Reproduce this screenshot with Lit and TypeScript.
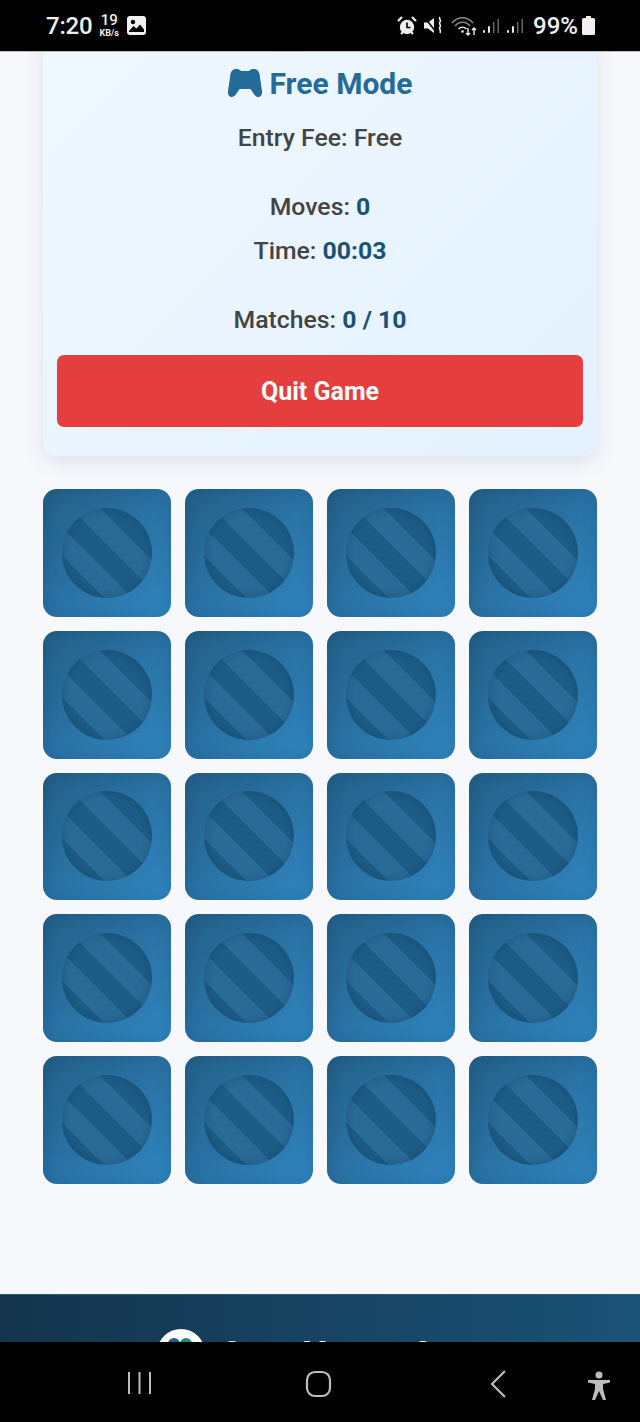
import { LitElement, html, css, svg } from "lit";
import { customElement } from "lit/decorators.js";

const TILE_COUNT = 20;

const signalBars = svg`
  <rect x="0" y="11" width="2" height="3" rx="1" fill="#e8e8e8"></rect>
  <rect x="5" y="7" width="2" height="7" rx="1" fill="#e8e8e8"></rect>
  <rect x="10" y="3" width="1.4" height="11" fill="#6d6d6d"></rect>
  <rect x="14.5" y="0" width="1.4" height="14" fill="#6d6d6d"></rect>
`;

@customElement("app-root")
export class AppRoot extends LitElement {
  static styles = css`
    :host {
      display: flex;
      flex-direction: column;
      width: 640px;
      height: 1422px;
      overflow: hidden;
      background: #f7f8fc;
      font-family: Roboto, "Liberation Sans", sans-serif;
    }

    .status {
      flex: none;
      height: 51px;
      box-sizing: border-box;
      padding: 0 45px 0 46px;
      background: #000;
      color: #f0f0f0;
      display: flex;
      align-items: center;
    }
    .clock {
      font-size: 24px;
      font-weight: 500;
      letter-spacing: -0.2px;
    }
    .speed {
      margin-left: 7px;
      display: flex;
      flex-direction: column;
      align-items: center;
      font-weight: 700;
    }
    .speed b {
      font-size: 15px;
      line-height: 15px;
      font-weight: 500;
    }
    .speed small {
      font-size: 9px;
      line-height: 10px;
    }
    .pic {
      margin-left: 8px;
    }
    .spacer {
      flex: 1;
    }
    .tray {
      display: flex;
      align-items: center;
    }
    .pct {
      font-size: 24px;
      font-weight: 500;
      margin: 0 4px 0 10px;
    }

    .page {
      flex: 1;
      min-height: 0;
      overflow: hidden;
      border-top: 1px solid #b9bcc0;
      box-sizing: border-box;
      display: flex;
      flex-direction: column;
    }

    .panel {
      margin: -19px 43px 0;
      padding: 32px 14px 29px;
      border-radius: 14px;
      background: linear-gradient(135deg, #f0f8ff, #e3f1fe);
      box-shadow: 0 6px 20px rgba(20, 50, 80, 0.11);
      text-align: center;
    }
    .title {
      margin: 0;
      height: 36px;
      display: flex;
      align-items: center;
      justify-content: center;
      gap: 8px;
      font-size: 30px;
      font-weight: 700;
      color: #246a9a;
    }
    .line {
      margin: 0;
      font-size: 24.8px;
      line-height: 44px;
      font-weight: 500;
      color: #444;
    }
    .line b {
      font-weight: 700;
      color: #1a5276;
    }
    .fee {
      margin-top: 15px;
      margin-bottom: 25px;
    }
    .matches {
      margin-top: 25px;
    }
    .quit {
      display: block;
      width: 100%;
      height: 72px;
      margin-top: 13px;
      border: none;
      border-radius: 7px;
      background: #e53e3e;
      color: #fff;
      font: 700 25px Roboto, "Liberation Sans", sans-serif;
    }

    .board {
      margin: 33px 43px 0;
      display: grid;
      grid-template-columns: repeat(4, 128px);
      grid-auto-rows: 127.8px;
      gap: 14px;
    }
    .tile {
      border-radius: 14px;
      background: linear-gradient(135deg, #235f88, #3086c1);
      box-shadow: inset 0 0 16px rgba(16, 50, 80, 0.2);
      display: flex;
      align-items: center;
      justify-content: center;
    }
    .disc {
      width: 90px;
      height: 90px;
      border-radius: 50%;
      background: repeating-linear-gradient(
        45deg,
        #296a97 0 10px,
        #1c5c86 10px 30px,
        #296a97 30px 40px
      );
      box-shadow: inset 0 0 8px rgba(10, 40, 65, 0.28);
    }

    .foot {
      flex: none;
      margin-top: 110px;
      height: 120px;
      box-sizing: border-box;
      border-top: 1px solid #2d5a72;
      background: linear-gradient(90deg, #14344d, #1a5276);
      padding: 34px 0 0 157px;
      display: flex;
      gap: 17px;
      color: #fff;
    }
    .logo {
      flex: none;
      width: 48px;
      height: 48px;
      border-radius: 50%;
      background: #fff;
      position: relative;
      overflow: hidden;
    }
    .logo i {
      position: absolute;
      top: 9px;
      width: 12px;
      height: 12px;
      border-radius: 50%;
    }
    .logo i:nth-child(1) {
      left: 11px;
      background: #1f5f8f;
    }
    .logo i:nth-child(2) {
      left: 23px;
      background: #1f8a78;
    }
    .brand {
      font-size: 28px;
      font-weight: 700;
      line-height: 40px;
      margin-top: 3px;
      white-space: nowrap;
    }

    .nav {
      flex: none;
      height: 80px;
      background: #000;
      position: relative;
    }
    .nav svg {
      position: absolute;
    }
  `;

  render() {
    return html`
      <div class="status">
        <span class="clock">7:20</span>
        <span class="speed"><b>19</b><small>KB/s</small></span>
        <svg class="pic" width="19" height="19" viewBox="0 0 19 19">
          <rect width="19" height="19" rx="3" fill="#f0f0f0"></rect>
          <circle cx="6" cy="6" r="2.2" fill="#000"></circle>
          <path d="M2 15l4.5-5 3 2.5 3.5-4 4 5V16H2z" fill="#000"></path>
        </svg>
        <span class="spacer"></span>
        <div class="tray">
          <svg width="20" height="20" viewBox="0 0 20 20">
            <circle cx="10" cy="11" r="7.2" fill="#eee"></circle>
            <path d="M10 6.5V11.5H13.5" fill="none" stroke="#000" stroke-width="1.6"></path>
            <path d="M1 5l4-4M19 5l-4-4M4 18l2-2M16 18l-2-2" stroke="#eee" stroke-width="2.2"></path>
          </svg>
          <svg style="margin-left:7px" width="20" height="20" viewBox="0 0 20 20">
            <path d="M0 6.5h4L10 2v15l-6-4.5H0z" fill="#eee"></path>
            <path d="M1 2l11 14" stroke="#000" stroke-width="1.5"></path>
            <path d="M16 1c-2 2 2 3 0 5s2 3 0 5 2 3 0 6" fill="none" stroke="#eee" stroke-width="1.6"></path>
          </svg>
          <svg style="margin-left:7px" width="27" height="20" viewBox="0 0 27 20">
            <path d="M1 7c6-7 15-7 21 0M4 10c4-5 11-5 15 0" fill="none" stroke="#8a8a8a" stroke-width="1.5"></path>
            <path d="M7.5 13c2.500-2.500 5.500-2.500 8 0" fill="none" stroke="#eee" stroke-width="1.5"></path>
            <circle cx="11.500" cy="15.500" r="1.300" fill="#eee"></circle>
            <path d="M17 12v7M15 17l2 2 2-2M23 19v-7M21 14l2-2 2 2" fill="none" stroke="#eee" stroke-width="1.400"></path>
          </svg>
          <svg style="margin-left:5px" width="16" height="14" viewBox="0 0 16 14">${signalBars}</svg>
          <svg style="margin-left:8px" width="16" height="14" viewBox="0 0 16 14">${signalBars}</svg>
          <span class="pct">99%</span>
          <svg width="13" height="19" viewBox="0 0 13 19">
            <path d="M4 0h5v2h2.500a1.500 1.500 0 0 1 1.500 1.500V17.500a1.500 1.500 0 0 1-1.500 1.500h-10A1.500 1.500 0 0 1 0 17.500V3.500A1.500 1.500 0 0 1 1.500 2H4z" fill="#f0f0f0"></path>
          </svg>
        </div>
      </div>

      <div class="page">
        <section class="panel">
          <h2 class="title">
            <svg width="34" height="28" viewBox="0 0 34 28">
              <path
                d="M8 0c2 0 4 .5 5 2h8c1-1.500 3-2 5-2 3 0 5 2 5.500 5L34 22c.5 3-1 6-3.500 6-2 0-3.500-1.500-5-3.500L22.500 20h-11l-3 4.500C7 26.500 5.500 28 3.500 28 1 28-.5 25 0 22L2.500 5C3 2 5 0 8 0z"
                fill="#246a9a"
              ></path>
            </svg>
            Free Mode
          </h2>
          <p class="line fee">Entry Fee: Free</p>
          <p class="line">Moves: <b>0</b></p>
          <p class="line">Time: <b>00:03</b></p>
          <p class="line matches">Matches: <b>0 / 10</b></p>
          <button class="quit">Quit Game</button>
        </section>

        <div class="board">
          ${Array.from(
            { length: TILE_COUNT },
            () => html`<div class="tile"><div class="disc"></div></div>`
          )}
        </div>

        <footer class="foot">
          <div class="logo"><i></i><i></i></div>
          <div class="brand">Game Memory Score</div>
        </footer>
      </div>

      <div class="nav">
        <svg style="left:127px;top:29px" width="25" height="25" viewBox="0 0 25 25">
          <path d="M2 1v22M12.500 1v22M23 1v22" stroke="#bdbdbd" stroke-width="2" fill="none"></path>
        </svg>
        <svg style="left:305px;top:28px" width="28" height="28" viewBox="0 0 28 28">
          <rect x="2" y="2" width="23" height="24" rx="8" fill="none" stroke="#bdbdbd" stroke-width="2.200"></rect>
        </svg>
        <svg style="left:489px;top:28px" width="20" height="28" viewBox="0 0 20 28">
          <path d="M16 1L3 14l13 13" fill="none" stroke="#bdbdbd" stroke-width="2.200"></path>
        </svg>
        <svg style="left:586px;top:29px" width="26" height="30" viewBox="0 0 26 30">
          <circle cx="13" cy="4" r="3.500" fill="#bdbdbd"></circle>
          <path d="M2 9h22v2.500l-7 1.500v5l3 11h-3l-4-9-4 9H6l3-11v-5L2 11.500z" fill="#bdbdbd"></path>
        </svg>
      </div>
    `;
  }
}
